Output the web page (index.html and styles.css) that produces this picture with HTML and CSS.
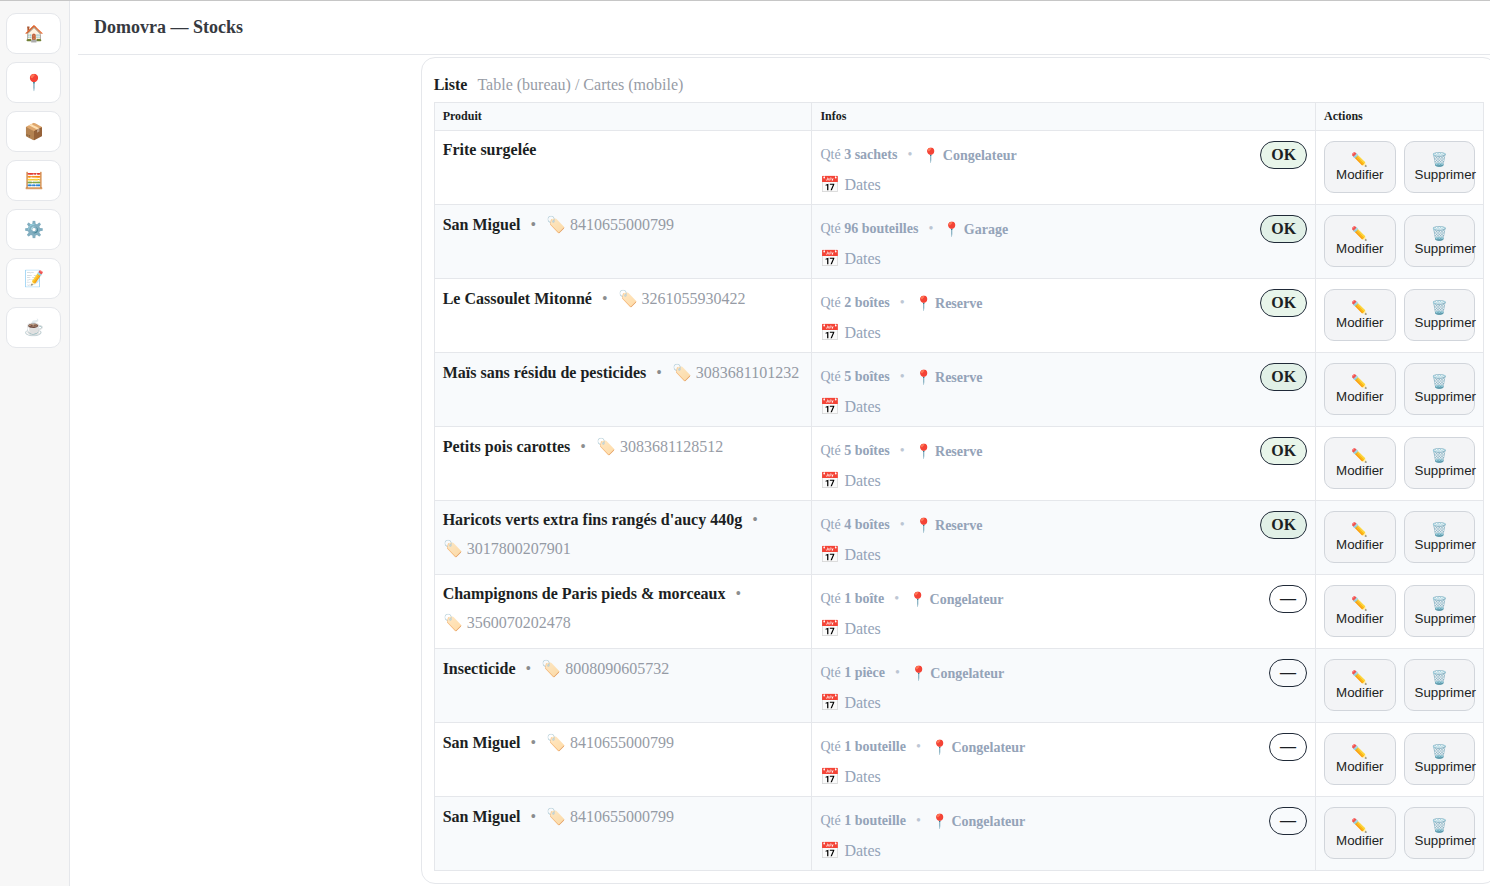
FILE: index.html
```
<!DOCTYPE html>
<html lang="fr">
<head>
    <meta charset="UTF-8">
    <meta name="viewport" content="width=device-width, initial-scale=1">
    <title>Domovra — Stocks</title>
    <link rel="stylesheet" href="styles.css">
</head>
<body>
    <nav class="sidebar">
        <a href="#" aria-label="Accueil">🏠</a>
        <a href="#" aria-label="Emplacements">📍</a>
        <a href="#" aria-label="Produits">📦</a>
        <a href="#" aria-label="Stocks">🧮</a>
        <a href="#" aria-label="Configuration">⚙️</a>
        <a href="#" aria-label="Journal">📝</a>
        <a href="#" aria-label="Soutenir">☕</a>
    </nav>

    <main class="page">
        <header class="topbar">
            <h1>Domovra — Stocks</h1>
        </header>

        <section class="card">
            <div class="card-head">
                <h2>Liste</h2>
                <span class="muted">Table (bureau) / Cartes (mobile)</span>
            </div>

            <table class="lots">
                <thead>
                    <tr>
                        <th class="col-product">Produit</th>
                        <th class="col-infos">Infos</th>
                        <th class="col-actions">Actions</th>
                    </tr>
                </thead>
                <tbody>
                    <tr>
                        <td>
                            <div class="product"><strong>Frite surgelée</strong></div>
                        </td>
                        <td>
                            <div class="infos"><span>Qté <b>3 sachets</b></span><span class="sep">•</span><b>📍 Congelateur</b><span class="badge ok">OK</span></div>
                            <details><summary>📅 Dates</summary></details>
                        </td>
                        <td>
                            <div class="actions"><button type="button">✏️ Modifier</button><button type="button">🗑️ Supprimer</button></div>
                        </td>
                    </tr>
                    <tr>
                        <td>
                            <div class="product"><strong>San Miguel</strong><span class="dot">•</span><span class="muted">🏷️ 8410655000799</span></div>
                        </td>
                        <td>
                            <div class="infos"><span>Qté <b>96 bouteilles</b></span><span class="sep">•</span><b>📍 Garage</b><span class="badge ok">OK</span></div>
                            <details><summary>📅 Dates</summary></details>
                        </td>
                        <td>
                            <div class="actions"><button type="button">✏️ Modifier</button><button type="button">🗑️ Supprimer</button></div>
                        </td>
                    </tr>
                    <tr>
                        <td>
                            <div class="product"><strong>Le Cassoulet Mitonné</strong><span class="dot">•</span><span class="muted">🏷️ 3261055930422</span></div>
                        </td>
                        <td>
                            <div class="infos"><span>Qté <b>2 boîtes</b></span><span class="sep">•</span><b>📍 Reserve</b><span class="badge ok">OK</span></div>
                            <details><summary>📅 Dates</summary></details>
                        </td>
                        <td>
                            <div class="actions"><button type="button">✏️ Modifier</button><button type="button">🗑️ Supprimer</button></div>
                        </td>
                    </tr>
                    <tr>
                        <td>
                            <div class="product"><strong>Maïs sans résidu de pesticides</strong><span class="dot">•</span><span class="muted">🏷️ 3083681101232</span></div>
                        </td>
                        <td>
                            <div class="infos"><span>Qté <b>5 boîtes</b></span><span class="sep">•</span><b>📍 Reserve</b><span class="badge ok">OK</span></div>
                            <details><summary>📅 Dates</summary></details>
                        </td>
                        <td>
                            <div class="actions"><button type="button">✏️ Modifier</button><button type="button">🗑️ Supprimer</button></div>
                        </td>
                    </tr>
                    <tr>
                        <td>
                            <div class="product"><strong>Petits pois carottes</strong><span class="dot">•</span><span class="muted">🏷️ 3083681128512</span></div>
                        </td>
                        <td>
                            <div class="infos"><span>Qté <b>5 boîtes</b></span><span class="sep">•</span><b>📍 Reserve</b><span class="badge ok">OK</span></div>
                            <details><summary>📅 Dates</summary></details>
                        </td>
                        <td>
                            <div class="actions"><button type="button">✏️ Modifier</button><button type="button">🗑️ Supprimer</button></div>
                        </td>
                    </tr>
                    <tr>
                        <td>
                            <div class="product"><strong>Haricots verts extra fins rangés d'aucy 440g</strong><span class="dot">•</span><span class="muted">🏷️ 3017800207901</span></div>
                        </td>
                        <td>
                            <div class="infos"><span>Qté <b>4 boîtes</b></span><span class="sep">•</span><b>📍 Reserve</b><span class="badge ok">OK</span></div>
                            <details><summary>📅 Dates</summary></details>
                        </td>
                        <td>
                            <div class="actions"><button type="button">✏️ Modifier</button><button type="button">🗑️ Supprimer</button></div>
                        </td>
                    </tr>
                    <tr>
                        <td>
                            <div class="product"><strong>Champignons de Paris pieds &amp; morceaux</strong><span class="dot">•</span><span class="muted">🏷️ 3560070202478</span></div>
                        </td>
                        <td>
                            <div class="infos"><span>Qté <b>1 boîte</b></span><span class="sep">•</span><b>📍 Congelateur</b><span class="badge">—</span></div>
                            <details><summary>📅 Dates</summary></details>
                        </td>
                        <td>
                            <div class="actions"><button type="button">✏️ Modifier</button><button type="button">🗑️ Supprimer</button></div>
                        </td>
                    </tr>
                    <tr>
                        <td>
                            <div class="product"><strong>Insecticide</strong><span class="dot">•</span><span class="muted">🏷️ 8008090605732</span></div>
                        </td>
                        <td>
                            <div class="infos"><span>Qté <b>1 pièce</b></span><span class="sep">•</span><b>📍 Congelateur</b><span class="badge">—</span></div>
                            <details><summary>📅 Dates</summary></details>
                        </td>
                        <td>
                            <div class="actions"><button type="button">✏️ Modifier</button><button type="button">🗑️ Supprimer</button></div>
                        </td>
                    </tr>
                    <tr>
                        <td>
                            <div class="product"><strong>San Miguel</strong><span class="dot">•</span><span class="muted">🏷️ 8410655000799</span></div>
                        </td>
                        <td>
                            <div class="infos"><span>Qté <b>1 bouteille</b></span><span class="sep">•</span><b>📍 Congelateur</b><span class="badge">—</span></div>
                            <details><summary>📅 Dates</summary></details>
                        </td>
                        <td>
                            <div class="actions"><button type="button">✏️ Modifier</button><button type="button">🗑️ Supprimer</button></div>
                        </td>
                    </tr>
                    <tr>
                        <td>
                            <div class="product"><strong>San Miguel</strong><span class="dot">•</span><span class="muted">🏷️ 8410655000799</span></div>
                        </td>
                        <td>
                            <div class="infos"><span>Qté <b>1 bouteille</b></span><span class="sep">•</span><b>📍 Congelateur</b><span class="badge">—</span></div>
                            <details><summary>📅 Dates</summary></details>
                        </td>
                        <td>
                            <div class="actions"><button type="button">✏️ Modifier</button><button type="button">🗑️ Supprimer</button></div>
                        </td>
                    </tr>
                </tbody>
            </table>
        </section>
    </main>
</body>
</html>
```
FILE: styles.css
```
* {
    box-sizing: border-box;
}
body {
    margin: 0;
    display: flex;
    min-height: 100vh;
    border-top: 1px solid #c6c6c6;
    overflow-x: hidden;
    font-family: "Liberation Serif", serif;
    font-size: 16px;
    color: #1c1f23;
    background: #fff;
}
.sidebar {
    flex: 0 0 70px;
    display: flex;
    flex-direction: column;
    gap: 8px;
    padding: 12px 8px 12px 6px;
    background: #f7f7f7;
    border-right: 1px solid #e5e7eb;
}
.sidebar a {
    display: flex;
    align-items: center;
    justify-content: center;
    height: 41px;
    border: 1px solid #e5e7eb;
    border-radius: 10px;
    background: #fff;
    font-size: 16px;
    color: inherit;
    text-decoration: none;
}
.page {
    flex: 1;
    min-width: 0;
    margin-left: 8px;
}
.topbar {
    padding: 16px;
    border-bottom: 1px solid #e5e7eb;
}
.topbar h1 {
    margin: 0;
    font-size: 18px;
    line-height: 21px;
    color: #36393f;
}
.card {
    width: 76.23%;
    margin: 2px -7px 2px auto;
    padding: 18px 12px 12px;
    border: 1px solid #e5e7eb;
    border-radius: 14px;
}
.card-head {
    display: flex;
    align-items: center;
    gap: 10px;
    margin-bottom: 8px;
}
.card-head h2 {
    margin: 0;
    font-size: 16px;
}
.muted {
    color: #6b7280;
    opacity: .7;
}
.lots {
    width: 100%;
    table-layout: fixed;
    border-collapse: collapse;
}
.lots th,
.lots td {
    border: 1px solid #e5e7eb;
    text-align: left;
    vertical-align: top;
}
.lots th {
    padding: 6px 8px;
    font-size: 12px;
    line-height: 15px;
    background: #f8fafc;
}
.lots td {
    padding: 10px 8px;
}
.lots tbody tr:nth-child(even) {
    background: #f8fafc;
}
.col-product {
    width: 36%;
}
.col-infos {
    width: 48%;
}
.col-actions {
    width: 16%;
}
.product {
    display: flex;
    flex-wrap: wrap;
    align-items: center;
    gap: 10px;
}
.dot {
    opacity: .5;
}
.infos {
    display: flex;
    align-items: center;
    gap: 10px;
    font-size: 14px;
    color: #94a3b8;
}
.sep {
    opacity: .6;
}
.badge {
    margin-left: auto;
    padding: 4px 10px;
    border: 1px solid #1f2937;
    border-radius: 14px;
    font-size: 16px;
    font-weight: bold;
    color: #1c1f23;
}
.badge.ok {
    background: rgba(46, 160, 67, .11);
}
details {
    margin-top: 6px;
    color: #94a3b8;
}
summary {
    list-style: none;
    cursor: pointer;
}
.actions {
    display: grid;
    grid-template-columns: repeat(2, minmax(0, 1fr));
    gap: 8px;
}
.actions button {
    height: 52px;
    padding: 10px;
    border: 1px solid #d1d5db;
    border-radius: 10px;
    background: #f3f4f6;
    font-family: "Liberation Sans", Arial, sans-serif;
    line-height: 15px;
    color: #1c1f23;
    cursor: pointer;
}
```
